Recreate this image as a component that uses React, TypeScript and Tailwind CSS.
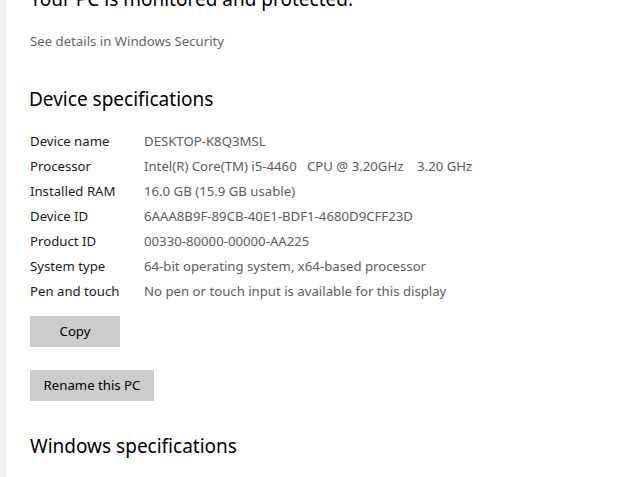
const specs: [string, string][] = [
  ["Device name", "DESKTOP-K8Q3MSL"],
  ["Processor", "Intel(R) Core(TM) i5-4460   CPU @ 3.20GHz    3.20 GHz"],
  ["Installed RAM", "16.0 GB (15.9 GB usable)"],
  ["Device ID", "6AAA8B9F-89CB-40E1-BDF1-4680D9CFF23D"],
  ["Product ID", "00330-80000-00000-AA225"],
  ["System type", "64-bit operating system, x64-based processor"],
  ["Pen and touch", "No pen or touch input is available for this display"],
];

export default function App() {
  return (
    <div className="flex h-screen overflow-hidden bg-white font-['Noto_Sans',sans-serif] text-[#000]">
      {/* nav pane edge */}
      <div className="w-[6px] shrink-0 bg-[#f2f2f2]" />

      <div className="flex flex-col items-start pl-[24px]">
        <p className="-mt-[15px] text-[19px] leading-[28px] text-black">Your PC is monitored and protected.</p>
        <p className="mt-[18px] text-[13.2px] leading-[20px] text-[#666]">See details in Windows Security</p>

        <h2 className="mt-[34px] -ml-[1px] text-[19px] leading-[28px] text-black">Device specifications</h2>

        <div className="mt-[16px] flex flex-col">
          {specs.map(([label, value]) => (
            <div key={label} className="flex h-[25px] items-center text-[13.2px]">
              <span className="w-[114px] text-[#1a1a1a]">{label}</span>
              <span className="whitespace-pre text-[#5d5d5d]">{value}</span>
            </div>
          ))}
        </div>

        <button className="mt-[12px] h-[31px] w-[90px] bg-[#cccccc] text-[13.2px] text-black">Copy</button>
        <button className="mt-[23px] h-[31px] w-[124px] bg-[#cccccc] text-[13.2px] text-black">Rename this PC</button>

        <h2 className="mt-[31px] text-[19px] leading-[28px] text-black">Windows specifications</h2>
      </div>
    </div>
  );
}
